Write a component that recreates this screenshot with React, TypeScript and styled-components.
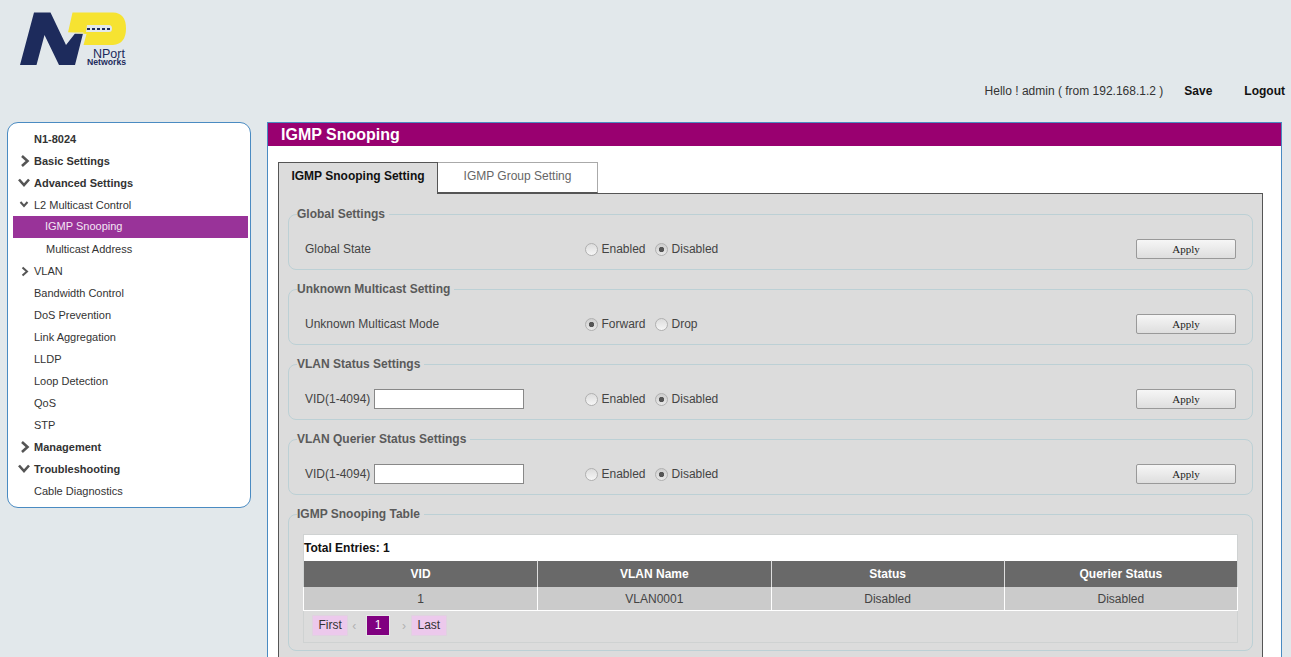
import React from "react";
import styled, { createGlobalStyle } from "styled-components";

const GlobalStyle = createGlobalStyle`
  html, body {
    margin: 0;
    height: 657px;
    overflow: hidden;
    background: #e2e8eb;
    font-family: "Liberation Sans", Arial, sans-serif;
    font-size: 12px;
    color: #333;
  }
`;

const Header = styled.header`
  height: 122px;
  display: flex;
  flex-direction: column;
  padding: 12px 6px 0 20px;
  box-sizing: border-box;
`;

const Greeting = styled.div`
  display: flex;
  justify-content: flex-end;
  align-items: center;
  height: 16px;
  margin-top: 15px;
  color: #333;
`;

const TopLink = styled.a<{ $gap: number }>`
  margin-left: ${(p) => p.$gap}px;
  font-weight: bold;
  color: #111;
`;

const Page = styled.div`
  display: flex;
  align-items: flex-start;
  gap: 16px;
  padding-left: 7px;
`;

const Sidebar = styled.nav`
  width: 244px;
  box-sizing: border-box;
  background: #fff;
  border: 1px solid #4a8bc2;
  border-radius: 11px;
  padding: 5px 2px 5px 5px;
`;

const NavRow = styled.div<{ $indent: number; $bold?: boolean; $active?: boolean }>`
  position: relative;
  height: 22px;
  line-height: ${(p) => (p.$active ? 21 : 22)}px;
  font-size: 11px;
  padding-left: ${(p) => p.$indent}px;
  font-weight: ${(p) => (p.$bold ? "bold" : "normal")};
  background: ${(p) => (p.$active ? "#993399" : "transparent")};
  color: ${(p) => (p.$active ? "#f4e6f4" : "#333")};
`;

const NavIcon = styled.svg<{ $left: number; $top: number }>`
  position: absolute;
  left: ${(p) => p.$left}px;
  top: ${(p) => p.$top}px;
  fill: none;
  stroke: #555;
`;

const Main = styled.main`
  width: 1015px;
  height: 600px;
  box-sizing: border-box;
  background: #fff;
  border: 1px solid #4a8bc2;
  border-bottom: none;
`;

const TitleBar = styled.h1`
  margin: 0;
  height: 23px;
  line-height: 23px;
  padding-left: 13px;
  font-size: 16px;
  font-weight: bold;
  color: #fff;
  background: #990070;
`;

const TabStrip = styled.div`
  display: flex;
  margin: 16px 0 0 10px;
  position: relative;
  z-index: 1;
`;

const Tab = styled.div<{ $active?: boolean }>`
  box-sizing: border-box;
  height: ${(p) => (p.$active ? 32 : 31)}px;
  width: 160px;
  line-height: 27px;
  text-align: center;
  font-weight: ${(p) => (p.$active ? "bold" : "normal")};
  color: ${(p) => (p.$active ? "#111" : "#666")};
  background: ${(p) => (p.$active ? "#dcdcdc" : "#fff")};
  border: 1px solid ${(p) => (p.$active ? "#555" : "#aaa")};
  border-bottom: ${(p) => (p.$active ? "none" : "1px solid #555")};
  border-left-width: ${(p) => (p.$active ? 1 : 0)}px;
`;

const Panel = styled.div`
  width: 985px;
  height: 500px;
  margin: -1px 0 0 10px;
  box-sizing: border-box;
  background: #dcdcdc;
  border: 1px solid #555;
  padding: 13px 9px 0;
`;

const Group = styled.fieldset`
  margin: 0 0 12px;
  padding: 0 16px 0 16px;
  border: 1px solid #bcd0d5;
  border-radius: 8px;
  min-width: 0;
`;

const GroupTitle = styled.legend`
  margin-left: -8px;
  padding: 0 4px 0 0;
  line-height: 14px;
  font-weight: bold;
  color: #5a5a5a;
`;

const SettingRow = styled.div`
  display: grid;
  grid-template-columns: 280px 1fr 100px;
  align-items: center;
  height: 48px;
  padding-top: 8px;
  box-sizing: border-box;
  color: #444;
`;

const LabelCell = styled.div`
  display: flex;
  align-items: center;
  gap: 4px;
`;

const TextInput = styled.input`
  width: 150px;
  height: 20px;
  box-sizing: border-box;
  border: 1px solid #888;
  background: #fff;
  padding: 0 2px;
  margin: 0;
`;

const RadioSet = styled.div`
  display: flex;
  align-items: center;
  gap: 9.5px;
`;

const RadioLabel = styled.label`
  display: flex;
  align-items: center;
  gap: 3.5px;
`;

const Radio = styled.input.attrs({ type: "radio" })`
  appearance: none;
  width: 13px;
  height: 13px;
  margin: 0;
  border: 1px solid #b0b0b0;
  border-radius: 50%;
  background: ${(p) =>
    p.defaultChecked
      ? "radial-gradient(circle, #555 0 2.4px, transparent 3px), linear-gradient(#cecece, #e8e8e8)"
      : "linear-gradient(#dcdcdc, #f6f6f6)"};
`;

const ApplyButton = styled.button`
  width: 100px;
  height: 20px;
  box-sizing: border-box;
  padding: 0;
  font-family: "Liberation Serif", "Times New Roman", serif;
  font-size: 11px;
  color: #222;
  background: linear-gradient(#f6f6f6, #dedede);
  border: 1px solid #999;
  border-radius: 2px;
`;

const TableWrap = styled.div`
  margin: 13px 0 7px -2px;
  border: 1px solid #cfd2d2;
  width: 935px;
  box-sizing: border-box;
`;

const TotalBar = styled.div`
  height: 25px;
  line-height: 27px;
  background: #fff;
  font-weight: bold;
  color: #111;
`;

const DataTable = styled.table`
  width: 100%;
  border-collapse: separate;
  border-spacing: 0;
  table-layout: fixed;
`;

const HeadCell = styled.th`
  height: 26px;
  padding: 0;
  background: #696969;
  color: #fff;
  font-weight: bold;
  text-align: center;
  border-left: 1px solid #ddd;
  border-top: 1px solid #fff;
  &:first-child { border-left: none; }
`;

const BodyCell = styled.td`
  height: 23px;
  padding: 0;
  background: #cbcbcb;
  color: #444;
  text-align: center;
  border-left: 1px solid #fff;
  border-bottom: 1px solid #fff;
  &:first-child {
    border-left: none;
    box-shadow: -1px 0 0 #fff;
  }
  &:last-child { box-shadow: 1px 0 0 #fff; }
`;

const Pager = styled.div`
  display: flex;
  align-items: center;
  height: 31px;
  padding: 0 0 2px 8px;
  box-sizing: border-box;
`;

const PageButton = styled.span<{ $current?: boolean }>`
  box-sizing: border-box;
  height: 21px;
  line-height: 19px;
  padding: 0 ${(p) => (p.$current ? 7.5 : 5.5)}px;
  background: ${(p) => (p.$current ? "#800080" : "#ecc9ec")};
  color: ${(p) => (p.$current ? "#fff" : "#333")};
  border: 1px solid ${(p) => (p.$current ? "#e6e6e6" : "#e0d2e0")};
`;

const PageArrow = styled.span<{ $width: number; $pad: number }>`
  box-sizing: border-box;
  width: ${(p) => p.$width}px;
  padding-left: ${(p) => p.$pad}px;
  color: #b0b0b0;
  font-size: 12px;
`;

const LogoMark = styled.svg`
  flex: none;
  display: block;
`;

type NavItem = {
  label: string;
  indent: number;
  bold?: boolean;
  active?: boolean;
  icon?: "right" | "down" | "smallRight" | "smallDown";
};

const navItems: NavItem[] = [
  { label: "N1-8024", indent: 21, bold: true },
  { label: "Basic Settings", indent: 21, bold: true, icon: "right" },
  { label: "Advanced Settings", indent: 21, bold: true, icon: "down" },
  { label: "L2 Multicast Control", indent: 21, icon: "smallDown" },
  { label: "IGMP Snooping", indent: 32, active: true },
  { label: "Multicast Address", indent: 33 },
  { label: "VLAN", indent: 21, icon: "smallRight" },
  { label: "Bandwidth Control", indent: 21 },
  { label: "DoS Prevention", indent: 21 },
  { label: "Link Aggregation", indent: 21 },
  { label: "LLDP", indent: 21 },
  { label: "Loop Detection", indent: 21 },
  { label: "QoS", indent: 21 },
  { label: "STP", indent: 21 },
  { label: "Management", indent: 21, bold: true, icon: "right" },
  { label: "Troubleshooting", indent: 21, bold: true, icon: "down" },
  { label: "Cable Diagnostics", indent: 21 },
];

function Logo() {
  return (
    <LogoMark width="108" height="56" viewBox="20 12 108 56">
      <path d="M20 65 L34 12.5 L50.5 12.5 L66 45 L75 33.5 L83 33.5 L75 65 L59 65 L44.5 35 L36.5 65 Z" fill="#1d2b5c" />
      <path
        d="M72.5 12.5 L113 12.5 Q126 13 126 28.5 Q126 44 113 45 L83.5 45 L86.5 34 L68 32.5 Z M87 25 L86 32 L109 32 Q112 32 112 28.5 Q112 25 109 25 Z"
        fill="#f6e331"
        fillRule="evenodd"
      />
      <path d="M68 33 L83.5 33" stroke="#e2e8eb" strokeWidth="1" />
      <path d="M87 29 H110" stroke="#1d2b5c" strokeWidth="2" strokeDasharray="3 2" />
      <text x="93" y="57.5" fontFamily="Liberation Sans" fontSize="12.5" fill="#1d2b5c">NPort</text>
      <text x="87" y="64.5" fontFamily="Liberation Sans" fontSize="8.7" fontWeight="bold" fill="#1d2b5c">Networks</text>
    </LogoMark>
  );
}

function NavGlyph({ kind }: { kind: NonNullable<NavItem["icon"]> }) {
  if (kind === "right")
    return (
      <NavIcon $left={7} $top={4} width="10" height="14" strokeWidth="2.6">
        <path d="M2 2 L7.5 7 L2 12" />
      </NavIcon>
    );
  if (kind === "down")
    return (
      <NavIcon $left={4} $top={5} width="14" height="10" strokeWidth="2.6">
        <path d="M2 2.5 L7 8 L12 2.5" />
      </NavIcon>
    );
  if (kind === "smallRight")
    return (
      <NavIcon $left={8} $top={6} width="9" height="11" strokeWidth="2">
        <path d="M1.5 1.5 L6 5.5 L1.5 9.5" />
      </NavIcon>
    );
  return (
    <NavIcon $left={6} $top={6} width="10" height="8" strokeWidth="2">
      <path d="M1.5 2 L5 6 L8.5 2" />
    </NavIcon>
  );
}

function RadioPair({ name, first, second, firstOn }: { name: string; first: string; second: string; firstOn?: boolean }) {
  return (
    <RadioSet>
      <RadioLabel>
        <Radio name={name} defaultChecked={firstOn} />
        {first}
      </RadioLabel>
      <RadioLabel>
        <Radio name={name} defaultChecked={!firstOn} />
        {second}
      </RadioLabel>
    </RadioSet>
  );
}

export default function App() {
  return (
    <>
      <GlobalStyle />
      <Header>
        <Logo />
        <Greeting>
          Hello ! admin ( from 192.168.1.2 )
          <TopLink $gap={21}>Save</TopLink>
          <TopLink $gap={32}>Logout</TopLink>
        </Greeting>
      </Header>
      <Page>
        <Sidebar>
          {navItems.map((item) => (
            <NavRow key={item.label} $indent={item.indent} $bold={item.bold} $active={item.active}>
              {item.icon && <NavGlyph kind={item.icon} />}
              {item.label}
            </NavRow>
          ))}
        </Sidebar>
        <Main>
          <TitleBar>IGMP Snooping</TitleBar>
          <TabStrip>
            <Tab $active>IGMP Snooping Setting</Tab>
            <Tab>IGMP Group Setting</Tab>
          </TabStrip>
          <Panel>
            <Group>
              <GroupTitle>Global Settings</GroupTitle>
              <SettingRow>
                <LabelCell>Global State</LabelCell>
                <RadioPair name="global" first="Enabled" second="Disabled" />
                <ApplyButton>Apply</ApplyButton>
              </SettingRow>
            </Group>
            <Group>
              <GroupTitle>Unknown Multicast Setting</GroupTitle>
              <SettingRow>
                <LabelCell>Unknown Multicast Mode</LabelCell>
                <RadioPair name="unknown" first="Forward" second="Drop" firstOn />
                <ApplyButton>Apply</ApplyButton>
              </SettingRow>
            </Group>
            <Group>
              <GroupTitle>VLAN Status Settings</GroupTitle>
              <SettingRow>
                <LabelCell>
                  VID(1-4094)
                  <TextInput />
                </LabelCell>
                <RadioPair name="vlan" first="Enabled" second="Disabled" />
                <ApplyButton>Apply</ApplyButton>
              </SettingRow>
            </Group>
            <Group>
              <GroupTitle>VLAN Querier Status Settings</GroupTitle>
              <SettingRow>
                <LabelCell>
                  VID(1-4094)
                  <TextInput />
                </LabelCell>
                <RadioPair name="querier" first="Enabled" second="Disabled" />
                <ApplyButton>Apply</ApplyButton>
              </SettingRow>
            </Group>
            <Group>
              <GroupTitle>IGMP Snooping Table</GroupTitle>
              <TableWrap>
                <TotalBar>Total Entries: 1</TotalBar>
                <DataTable>
                  <thead>
                    <tr>
                      <HeadCell>VID</HeadCell>
                      <HeadCell>VLAN Name</HeadCell>
                      <HeadCell>Status</HeadCell>
                      <HeadCell>Querier Status</HeadCell>
                    </tr>
                  </thead>
                  <tbody>
                    <tr>
                      <BodyCell>1</BodyCell>
                      <BodyCell>VLAN0001</BodyCell>
                      <BodyCell>Disabled</BodyCell>
                      <BodyCell>Disabled</BodyCell>
                    </tr>
                  </tbody>
                </DataTable>
                <Pager>
                  <PageButton>First</PageButton>
                  <PageArrow $width={18} $pad={4}>‹</PageArrow>
                  <PageButton $current>1</PageButton>
                  <PageArrow $width={21} $pad={12}>›</PageArrow>
                  <PageButton>Last</PageButton>
                </Pager>
              </TableWrap>
            </Group>
          </Panel>
        </Main>
      </Page>
    </>
  );
}
